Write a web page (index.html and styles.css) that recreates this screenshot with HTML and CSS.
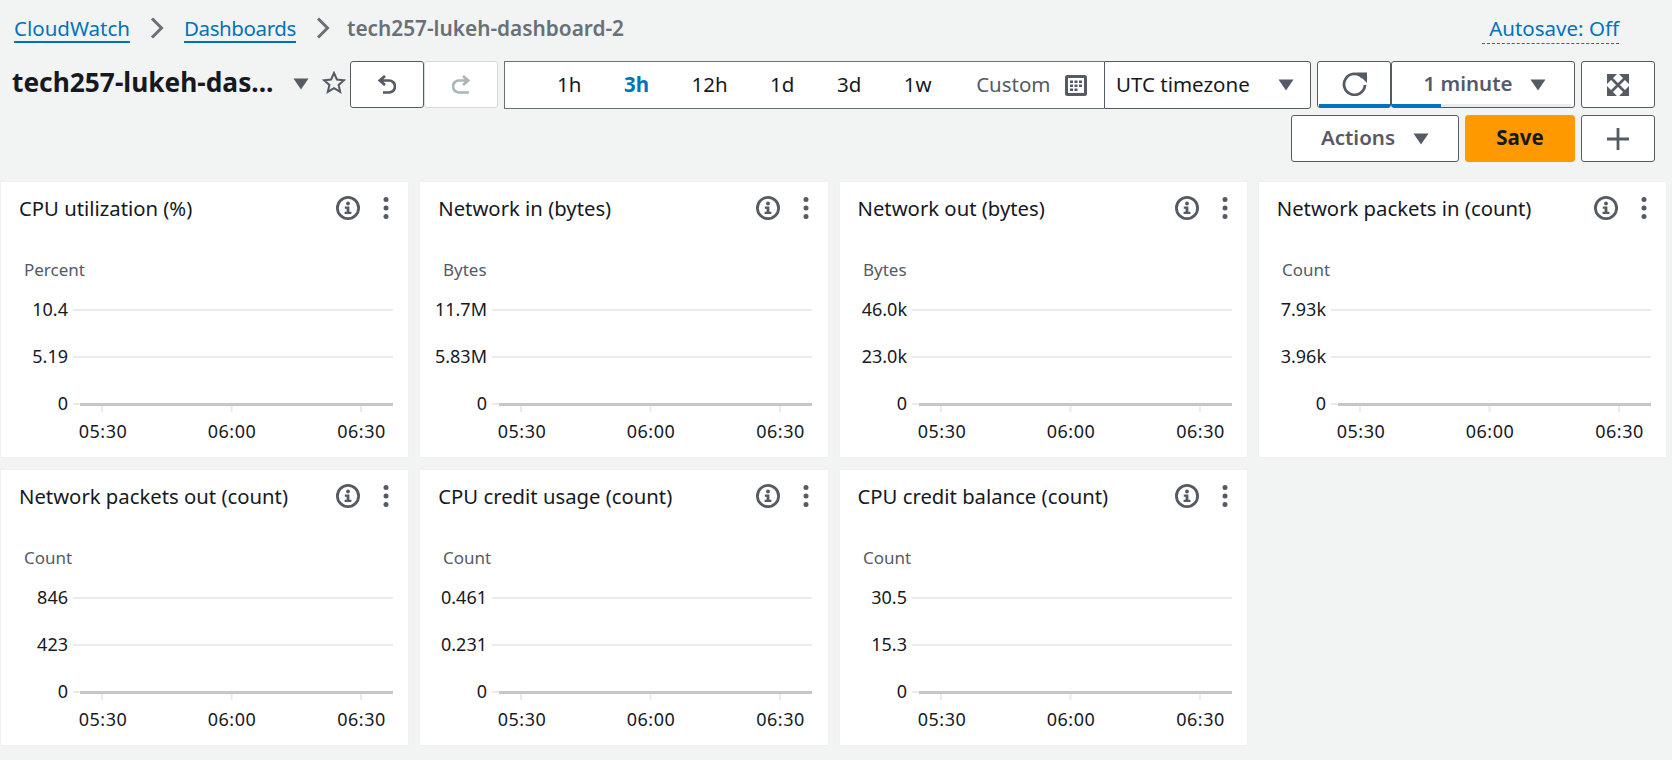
FILE: index.html
```html
<!DOCTYPE html>
<html lang="en">
<head>
  <meta charset="UTF-8" />
  <title>CloudWatch dashboard</title>
  <link rel="stylesheet" href="styles.css">
</head>
<body>
  <svg class="defs" width="0" height="0">
    <defs>
      <symbol id="caret" viewBox="0 0 16 12"><path d="M0.5 0.5h15L8 11.5z"/></symbol>
      <symbol id="info" viewBox="0 0 24 24">
        <circle cx="12" cy="12" r="10.6" fill="none" stroke="#545b64" stroke-width="2.8"/>
        <circle cx="12" cy="7.500" r="1.900" fill="#545b64"/>
        <path d="M8.800 10.400h4.600v5.300h2v2.300H8.600v-2.300h2v-3h-1.800z" fill="#545b64"/>
      </symbol>
      <symbol id="dots" viewBox="0 0 6 24">
        <circle cx="3" cy="3.500" r="2.500" fill="#545b64"/>
        <circle cx="3" cy="12" r="2.500" fill="#545b64"/>
        <circle cx="3" cy="20.500" r="2.500" fill="#545b64"/>
      </symbol>
      <g id="frame">
        <path class="grid" d="M72 76H392M72 123H392M72 170H79"/>
        <path class="tick" d="M101 172V178M230.500 172V178M360 172V178"/>
        <path class="base" d="M79 170.500H392"/>
      </g>
    </defs>
  </svg>

  <header class="top">
    <nav class="crumbs">
      <a class="crumb" href="#">CloudWatch</a>
      <svg class="chev" viewBox="0 0 14 22"><path d="M2 1.500l9.500 9.500L2 20.500"/></svg>
      <a class="crumb crumb-tight" href="#">Dashboards</a>
      <svg class="chev" viewBox="0 0 14 22"><path d="M2 1.500l9.500 9.500L2 20.500"/></svg>
      <span class="crumb-current">tech257-lukeh-dashboard-2</span>
    </nav>
    <a class="autosave" href="#">Autosave: Off</a>
  </header>

  <div class="toolbar">
    <h1 class="dash-title">tech257-lukeh-das...</h1>
    <svg class="caret title-caret"><use href="#caret"/></svg>
    <svg class="star" viewBox="0 0 24 23"><path d="M12 2l2.900 6.500 7.100.7-5.400 4.700 1.600 7-6.200-3.700-6.200 3.700 1.600-7L2 9.200l7.100-.7z"/></svg>
    <button class="btn undo" type="button">
      <svg class="ico-hist" viewBox="0 0 18 20"><path d="M7 1L1.800 5.500 7 10M2 5.500h9a6 6 0 0 1 0 12H5"/></svg>
    </button>
    <button class="btn redo" type="button" disabled>
      <svg class="ico-hist" viewBox="0 0 18 20"><path d="M11 1l5.200 4.500L11 10M16 5.500H7a6 6 0 0 0 0 12h10"/></svg>
    </button>
    <div class="range">
      <span class="range-item">1h</span>
      <span class="range-item active">3h</span>
      <span class="range-item">12h</span>
      <span class="range-item">1d</span>
      <span class="range-item">3d</span>
      <span class="range-item">1w</span>
      <span class="range-custom">Custom</span>
      <svg class="cal" viewBox="0 0 22 21">
        <rect x="1.500" y="1.500" width="19" height="18" rx="1" fill="none" stroke="#545b64" stroke-width="3"/>
        <path d="M5 5.500h3v2.500H5zM9.500 5.500h3v2.500h-3zM14 5.500h3v2.500h-3zM5 9.500h3v2.500H5zM9.500 9.500h3v2.500h-3zM14 9.500h3v2.500h-3zM5 13.500h3v2.500H5zM9.500 13.500h3v2.500h-3z" fill="#545b64"/>
      </svg>
    </div>
    <div class="tz">
      <span class="lift">UTC timezone</span>
      <svg class="caret"><use href="#caret"/></svg>
    </div>
    <button class="btn refresh" type="button">
      <svg class="ico-refresh" viewBox="0 0 25 24"><path d="M20.500 5.500A10.500 10.500 0 1 0 23 13"/><path class="solid" d="M14.500 0.500H25V11z"/></svg>
    </button>
    <button class="btn interval" type="button">
      <span class="lift">1 minute</span>
      <svg class="caret"><use href="#caret"/></svg>
    </button>
    <button class="btn square" type="button">
      <svg class="ico-full" viewBox="0 0 22 22">
        <path class="solid" d="M0 0h10L0 10zM22 0v10L12 0zM0 22V12l10 10zM22 22H12l10-10z"/>
        <path class="line" d="M2 2l18 18M20 2L2 20"/>
      </svg>
    </button>
  </div>

  <div class="toolbar-second">
    <button class="btn actions" type="button">
      <span class="lift-more">Actions</span>
      <svg class="caret"><use href="#caret"/></svg>
    </button>
    <button class="btn save" type="button"><span class="lift-more">Save</span></button>
    <button class="btn square" type="button">
      <svg class="ico-plus" viewBox="0 0 22 22"><path d="M11 0v22M0 11h22"/></svg>
    </button>
  </div>

  <main class="widgets">
    <section class="widget">
      <div class="widget-head">
        <h2>CPU utilization (%)</h2>
        <svg class="info"><use href="#info"/></svg>
        <svg class="dots"><use href="#dots"/></svg>
      </div>
      <svg class="chart">
        <use href="#frame"/>
        <text class="unit" x="23" y="42">Percent</text>
        <text class="axis" x="67" y="82" text-anchor="end">10.4</text>
        <text class="axis" x="67" y="129" text-anchor="end">5.19</text>
        <text class="axis" x="67" y="176" text-anchor="end">0</text>
        <text class="time" x="102" y="204" text-anchor="middle">05:30</text>
        <text class="time" x="231" y="204" text-anchor="middle">06:00</text>
        <text class="time" x="360.500" y="204" text-anchor="middle">06:30</text>
      </svg>
    </section>
    <section class="widget">
      <div class="widget-head">
        <h2>Network in (bytes)</h2>
        <svg class="info"><use href="#info"/></svg>
        <svg class="dots"><use href="#dots"/></svg>
      </div>
      <svg class="chart">
        <use href="#frame"/>
        <text class="unit" x="23" y="42">Bytes</text>
        <text class="axis" x="67" y="82" text-anchor="end">11.7M</text>
        <text class="axis" x="67" y="129" text-anchor="end">5.83M</text>
        <text class="axis" x="67" y="176" text-anchor="end">0</text>
        <text class="time" x="102" y="204" text-anchor="middle">05:30</text>
        <text class="time" x="231" y="204" text-anchor="middle">06:00</text>
        <text class="time" x="360.500" y="204" text-anchor="middle">06:30</text>
      </svg>
    </section>
    <section class="widget">
      <div class="widget-head">
        <h2>Network out (bytes)</h2>
        <svg class="info"><use href="#info"/></svg>
        <svg class="dots"><use href="#dots"/></svg>
      </div>
      <svg class="chart">
        <use href="#frame"/>
        <text class="unit" x="23" y="42">Bytes</text>
        <text class="axis" x="67" y="82" text-anchor="end">46.0k</text>
        <text class="axis" x="67" y="129" text-anchor="end">23.0k</text>
        <text class="axis" x="67" y="176" text-anchor="end">0</text>
        <text class="time" x="102" y="204" text-anchor="middle">05:30</text>
        <text class="time" x="231" y="204" text-anchor="middle">06:00</text>
        <text class="time" x="360.500" y="204" text-anchor="middle">06:30</text>
      </svg>
    </section>
    <section class="widget">
      <div class="widget-head">
        <h2>Network packets in (count)</h2>
        <svg class="info"><use href="#info"/></svg>
        <svg class="dots"><use href="#dots"/></svg>
      </div>
      <svg class="chart">
        <use href="#frame"/>
        <text class="unit" x="23" y="42">Count</text>
        <text class="axis" x="67" y="82" text-anchor="end">7.93k</text>
        <text class="axis" x="67" y="129" text-anchor="end">3.96k</text>
        <text class="axis" x="67" y="176" text-anchor="end">0</text>
        <text class="time" x="102" y="204" text-anchor="middle">05:30</text>
        <text class="time" x="231" y="204" text-anchor="middle">06:00</text>
        <text class="time" x="360.500" y="204" text-anchor="middle">06:30</text>
      </svg>
    </section>
    <section class="widget">
      <div class="widget-head">
        <h2>Network packets out (count)</h2>
        <svg class="info"><use href="#info"/></svg>
        <svg class="dots"><use href="#dots"/></svg>
      </div>
      <svg class="chart">
        <use href="#frame"/>
        <text class="unit" x="23" y="42">Count</text>
        <text class="axis" x="67" y="82" text-anchor="end">846</text>
        <text class="axis" x="67" y="129" text-anchor="end">423</text>
        <text class="axis" x="67" y="176" text-anchor="end">0</text>
        <text class="time" x="102" y="204" text-anchor="middle">05:30</text>
        <text class="time" x="231" y="204" text-anchor="middle">06:00</text>
        <text class="time" x="360.500" y="204" text-anchor="middle">06:30</text>
      </svg>
    </section>
    <section class="widget">
      <div class="widget-head">
        <h2>CPU credit usage (count)</h2>
        <svg class="info"><use href="#info"/></svg>
        <svg class="dots"><use href="#dots"/></svg>
      </div>
      <svg class="chart">
        <use href="#frame"/>
        <text class="unit" x="23" y="42">Count</text>
        <text class="axis" x="67" y="82" text-anchor="end">0.461</text>
        <text class="axis" x="67" y="129" text-anchor="end">0.231</text>
        <text class="axis" x="67" y="176" text-anchor="end">0</text>
        <text class="time" x="102" y="204" text-anchor="middle">05:30</text>
        <text class="time" x="231" y="204" text-anchor="middle">06:00</text>
        <text class="time" x="360.500" y="204" text-anchor="middle">06:30</text>
      </svg>
    </section>
    <section class="widget">
      <div class="widget-head">
        <h2>CPU credit balance (count)</h2>
        <svg class="info"><use href="#info"/></svg>
        <svg class="dots"><use href="#dots"/></svg>
      </div>
      <svg class="chart">
        <use href="#frame"/>
        <text class="unit" x="23" y="42">Count</text>
        <text class="axis" x="67" y="82" text-anchor="end">30.5</text>
        <text class="axis" x="67" y="129" text-anchor="end">15.3</text>
        <text class="axis" x="67" y="176" text-anchor="end">0</text>
        <text class="time" x="102" y="204" text-anchor="middle">05:30</text>
        <text class="time" x="231" y="204" text-anchor="middle">06:00</text>
        <text class="time" x="360.500" y="204" text-anchor="middle">06:30</text>
      </svg>
    </section>
  </main>
</body>
</html>
```

FILE: styles.css
```css
:root {
  --bg: #f2f3f3;
  --text: #16191f;
  --grey: #545b64;
  --link: #0073bb;
}
html, body { margin: 0; padding: 0; }
body {
  background: var(--bg);
  color: var(--text);
  font-family: "Noto Sans", sans-serif;
  font-size: 20.500px;
  height: 760px;
  overflow: hidden;
}
.defs { position: absolute; }

/* breadcrumbs */
.top {
  display: flex;
  justify-content: space-between;
  align-items: flex-start;
  box-sizing: border-box;
  height: 61px;
  padding: 16px 53px 0 14px;
}
.crumbs { display: flex; align-items: flex-start; }
.crumb {
  color: var(--link);
  text-decoration: none;
  border-bottom: 2px solid var(--link);
  line-height: 25px;
}
.crumb-tight { letter-spacing: -0.4px; }
.crumb-current {
  color: #687078;
  font-size: 20.800px;
  font-weight: 600;
  line-height: 25px;
  margin-left: -3px;
}
.chev {
  width: 14px;
  height: 22px;
  margin: 1px 20px 0;
  fill: none;
  stroke: #687078;
  stroke-width: 3;
}
.autosave {
  color: var(--link);
  text-decoration: none;
  border-bottom: 1px dashed var(--link);
  padding: 0 0 2px 7px;
  line-height: 25px;
}

/* toolbar */
.toolbar, .toolbar-second { display: flex; align-items: flex-start; }
.toolbar { height: 54px; padding-left: 12px; }
.toolbar-second { justify-content: flex-end; gap: 6px; padding-right: 17px; height: 67px; }
.dash-title {
  margin: 0;
  width: 281px;
  flex: none;
  font-size: 26.300px;
  font-weight: 700;
  line-height: 43px;
  white-space: nowrap;
}
.caret { width: 16px; height: 12px; fill: var(--grey); flex: none; }
.title-caret { margin-top: 17px; }
.star {
  width: 24px;
  height: 23px;
  margin: 10px 4px 0 13px;
  flex: none;
  fill: none;
  stroke: var(--grey);
  stroke-width: 2;
}
.btn {
  box-sizing: border-box;
  height: 47px;
  background: #fff;
  border: 1px solid var(--grey);
  border-radius: 3px;
  font: inherit;
  color: var(--grey);
  padding: 0;
  display: flex;
  align-items: center;
  justify-content: center;
  flex: none;
}
.lift { margin-bottom: 3px; }
.lift-more { margin-bottom: 4px; }
.undo, .redo { width: 74px; }
.redo { margin-right: 6px; border-color: #d5dbdb; }
.ico-hist { width: 18px; height: 20px; fill: none; stroke: var(--grey); stroke-width: 2.700; }
.redo .ico-hist { stroke: #aab7b8; }

.range {
  box-sizing: border-box;
  width: 600px;
  height: 48px;
  flex: none;
  display: flex;
  align-items: center;
  gap: 42.500px;
  background: #fff;
  border: 1px solid #687078;
  border-right: 0;
  padding: 0 0 3px 52px;
}
.range-item.active { color: var(--link); font-weight: 700; }
.range-custom { color: var(--grey); margin: 0 -28.500px 0 2px; }
.cal { width: 22px; height: 21px; margin-top: 3px; }
.tz {
  box-sizing: border-box;
  width: 207px;
  height: 48px;
  flex: none;
  display: flex;
  align-items: center;
  justify-content: space-between;
  background: #fff;
  border: 1px solid var(--grey);
  border-radius: 0 3px 3px 0;
  padding: 0 16px 0 11px;
  margin-right: 6px;
}
.refresh, .interval { position: relative; }
.refresh { width: 74px; }
.interval {
  width: 184px;
  margin-right: 6px;
  padding-left: 3px;
  gap: 17px;
  font-weight: 600;
}
/* auto-refresh progress under the two buttons */
.refresh::after, .interval::before, .interval::after {
  content: "";
  position: absolute;
  bottom: 0;
  height: 3px;
}
.refresh::after { left: 1px; right: 0; background: var(--link); }
.interval::before { left: 0; right: 3px; background: #e9ebed; }
.interval::after { left: 0; width: 49px; background: var(--link); }
.ico-refresh { width: 25px; height: 24px; margin-top: -2px; fill: none; stroke: var(--grey); stroke-width: 2.800; }
.ico-refresh .solid { fill: var(--grey); stroke: none; }
.square { width: 74px; }
.ico-full { width: 22px; height: 22px; }
.ico-full .solid { fill: var(--grey); }
.ico-full .line { stroke: var(--grey); stroke-width: 2.600; fill: none; }
.ico-plus { width: 22px; height: 22px; stroke: var(--grey); stroke-width: 2.800; }
.actions { width: 168px; gap: 18px; font-weight: 600; }
.save {
  width: 110px;
  background: #f90;
  border-color: #f90;
  color: var(--text);
  font-weight: 700;
}

/* widget grid */
.widgets {
  display: grid;
  grid-template-columns: repeat(4, 1fr);
  gap: 13px 12px;
  padding: 0 6px 0 1px;
}
.widget {
  background: #fff;
  height: 275px;
  overflow: hidden;
  box-shadow: 0 0 1px rgba(0, 0, 0, 0.08);
}
.widget-head {
  display: flex;
  align-items: center;
  height: 52px;
  padding: 0 19px 0 18px;
}
.widget-head h2 {
  flex: 1;
  margin: 0;
  font-size: 20.300px;
  font-weight: 400;
  white-space: nowrap;
}
.info { width: 24px; height: 24px; margin-right: 23px; flex: none; }
.dots { width: 6px; height: 24px; flex: none; }
.chart { display: block; width: 407px; height: 223px; }
.grid, .tick { stroke: #e9ebed; stroke-width: 2; fill: none; }
.base { stroke: #c6c6c6; stroke-width: 3; fill: none; }
.axis { font-size: 18px; fill: var(--text); }
.time { font-size: 18px; letter-spacing: 0.500px; fill: var(--text); }
.unit { font-size: 17px; fill: var(--grey); }
```
